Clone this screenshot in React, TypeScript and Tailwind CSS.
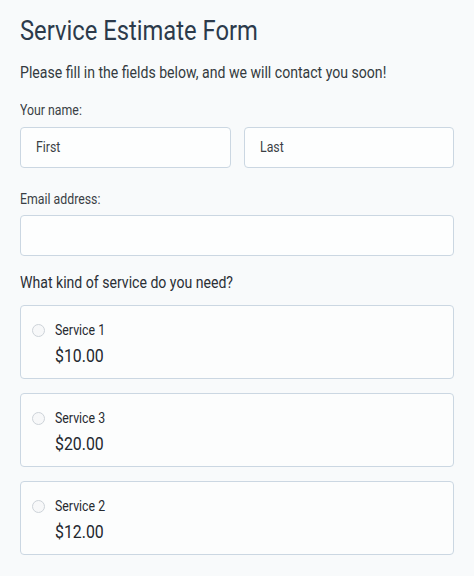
import type { ReactNode } from "react";

function T({ children }: { children: ReactNode }) {
  return <span className="inline-block origin-left scale-x-[0.88] whitespace-nowrap">{children}</span>;
}

export default function App() {
  const services = [
    { name: "Service 1", price: "$10.00" },
    { name: "Service 3", price: "$20.00" },
    { name: "Service 2", price: "$12.00" },
  ];
  return (
    <div className="min-h-[576px] w-[474px] bg-[#f8fafb] px-5 pt-[13px] text-[#2b2f36]" style={{ fontFamily: "Roboto, 'Noto Sans', sans-serif" }}>
      <h1 className="text-[27px] leading-[36px] text-[#2c3a4b]"><T>Service Estimate Form</T></h1>
      <p className="mt-[13px] text-[16px] leading-[22px] text-[#343a40]"><T>Please fill in the fields below, and we will contact you soon!</T></p>
      <div className="mt-[17px] text-[14px] leading-[18px] text-[#3a3f45]"><T>Your name:</T></div>
      <div className="mt-[8px] grid grid-cols-2 gap-[13px]">
        <div className="flex h-[41px] items-center rounded-[4px] border border-[#cbd7e2] bg-[#fdfefe] px-[15px] text-[14px] text-[#3a3f45]"><T>First</T></div>
        <div className="flex h-[41px] items-center rounded-[4px] border border-[#cbd7e2] bg-[#fdfefe] px-[15px] text-[14px] text-[#3a3f45]"><T>Last</T></div>
      </div>
      <div className="mt-[22px] text-[14px] leading-[18px] text-[#3a3f45]"><T>Email address:</T></div>
      <div className="mt-[7px] h-[41px] rounded-[4px] border border-[#cbd7e2] bg-[#fdfefe]" />
      <div className="mt-[16px] text-[16px] leading-[22px] text-[#2b2f36]"><T>What kind of service do you need?</T></div>
      <div className="mt-[11px] flex flex-col gap-[14px]">
        {services.map((s) => (
          <div key={s.name} className="h-[74px] rounded-[4px] border border-[#cbd7e2] bg-[#fcfdfd] pl-[11px] pt-[15px]">
            <div className="flex items-center gap-[10px]">
              <span className="block h-[13px] w-[13px] rounded-full border border-[#cdd3d9] bg-[#f7f8f9]" />
              <span className="text-[14px] leading-[18px] text-[#262a30]"><T>{s.name}</T></span>
            </div>
            <div className="mt-[5px] pl-[23px] text-[18px] leading-[24px] text-[#23272e]"><T>{s.price}</T></div>
          </div>
        ))}
      </div>
    </div>
  );
}
